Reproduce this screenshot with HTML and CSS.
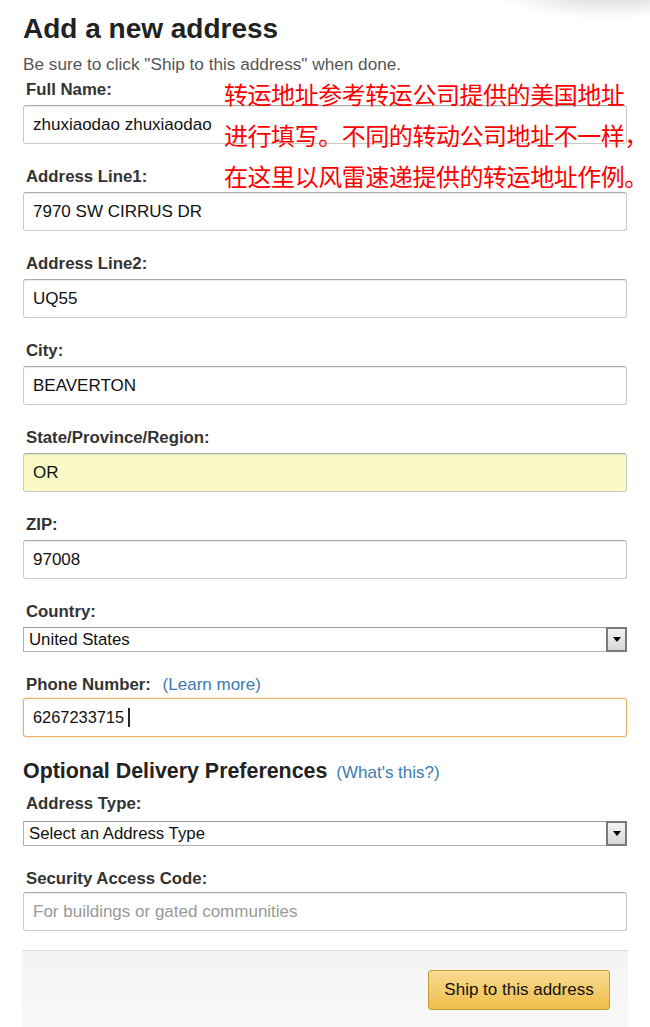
FILE: index.html
```html
<!DOCTYPE html>
<html lang="en">
<head>
<meta charset="utf-8">
<title>Add a new address</title>
<link rel="stylesheet" href="styles.css">
</head>
<body>
<div class="page">
  <div class="corner-shadow"></div>
  <h1 class="title">Add a new address</h1>
  <p class="subtitle">Be sure to click "Ship to this address" when done.</p>

  <div class="field">
    <div class="label">Full Name:</div>
    <div class="input">zhuxiaodao zhuxiaodao</div>
  </div>
  <div class="field">
    <div class="label">Address Line1:</div>
    <div class="input">7970 SW CIRRUS DR</div>
  </div>
  <div class="field">
    <div class="label">Address Line2:</div>
    <div class="input">UQ55</div>
  </div>
  <div class="field">
    <div class="label">City:</div>
    <div class="input">BEAVERTON</div>
  </div>
  <div class="field">
    <div class="label">State/Province/Region:</div>
    <div class="input input-autofill">OR</div>
  </div>
  <div class="field">
    <div class="label">ZIP:</div>
    <div class="input">97008</div>
  </div>
  <div class="field field-select">
    <div class="label">Country:</div>
    <div class="select">
      <span class="select-text">United States</span>
      <span class="select-btn"><span class="arrow"></span></span>
    </div>
  </div>
  <div class="field field-tight">
    <div class="label">Phone Number: <span class="link">(Learn more)</span></div>
    <div class="input input-focus"><span class="phone">6267233715</span><span class="caret"></span></div>
  </div>

  <h2 class="section">Optional Delivery Preferences <span class="link">(What's this?)</span></h2>
  <div class="field field-select field-after-section">
    <div class="label">Address Type:</div>
    <div class="select">
      <span class="select-text">Select an Address Type</span>
      <span class="select-btn"><span class="arrow"></span></span>
    </div>
  </div>
  <div class="field field-tight field-last">
    <div class="label">Security Access Code:</div>
    <div class="input placeholder">For buildings or gated communities</div>
  </div>

  <div class="footer">
    <button class="ship-btn" type="button">Ship to this address</button>
  </div>

  <div class="note">转运地址参考转运公司提供的美国地址<br>进行填写。不同的转动公司地址不一样，<br>在这里以风雷速递提供的转运地址作例。</div>
</div>
</body>
</html>
```

FILE: styles.css
```css
html, body {
  margin: 0;
  padding: 0;
  background: #fff;
  overflow: hidden;
}

body {
  font-family: "Liberation Sans", Arial, sans-serif;
  color: #111;
}

.page {
  position: relative;
  width: 650px;
  height: 1027px;
  overflow: hidden;
  padding: 13px 0 0 23px;
  box-sizing: border-box;
}

.corner-shadow {
  position: absolute;
  top: -30px;
  right: -40px;
  width: 200px;
  height: 50px;
  border-radius: 50%;
  background: radial-gradient(ellipse at 60% 40%, rgba(0,0,0,0.18) 0%, rgba(0,0,0,0.06) 45%, rgba(0,0,0,0) 70%);
}

.title {
  margin: 0;
  font-size: 28px;
  line-height: 32px;
  font-weight: bold;
  color: #222;
}

.subtitle {
  margin: 9px 0 3px;
  font-size: 17.2px;
  line-height: 20px;
  color: #555;
}

.field {
  width: 604px;
  margin-bottom: 20px;
}

.label {
  margin: 0 0 5px 3px;
  padding-top: 3px;
  font-size: 16.8px;
  line-height: 20px;
  font-weight: bold;
  color: #333;
}

.field-tight .label {
  padding-top: 2px;
  margin-bottom: 3px;
}

.field-after-section .label {
  padding-top: 1px;
  margin-bottom: 7px;
}

.field-select {
  margin-bottom: 21px;
}

.field-last {
  margin-bottom: 19px;
}

.link {
  font-weight: normal;
  color: #3a7bb0;
  font-size: 17px;
  margin-left: 7px;
}

.input {
  height: 39px;
  box-sizing: border-box;
  border: 1px solid #c9c9c9;
  border-top-color: #aaa;
  border-radius: 3px;
  box-shadow: inset 0 1px 1px rgba(0,0,0,0.08);
  padding: 0 9px;
  display: flex;
  align-items: center;
  font-size: 17px;
  color: #111;
  background: #fff;
}

.input-autofill {
  background: #fafac6;
}

.input-focus {
  border-color: #e8ad5f;
  box-shadow: 0 0 2px rgba(228,160,70,0.5);
}

.phone {
  font-size: 16.4px;
}

.caret {
  display: inline-block;
  width: 2px;
  height: 19px;
  margin-left: 4px;
  background: #222;
}

.placeholder {
  color: #999;
}

.select {
  height: 25px;
  box-sizing: border-box;
  border: 1px solid #b2b2b2;
  border-top-color: #999;
  display: flex;
  align-items: stretch;
  background: #fff;
}

.select-text {
  flex: 1;
  display: flex;
  align-items: center;
  padding-left: 5px;
  font-size: 16.8px;
  color: #111;
}

.select-btn {
  width: 21px;
  box-sizing: border-box;
  border: 2px solid #7a7a7a;
  margin: -1px -1px -1px 0;
  background: linear-gradient(#f3f3f3, #d8d8d8);
  display: flex;
  align-items: center;
  justify-content: center;
}

.arrow {
  width: 0;
  height: 0;
  border-left: 4px solid transparent;
  border-right: 4px solid transparent;
  border-top: 5px solid #000;
}

.section {
  margin: 22px 0 8px;
  font-size: 21.4px;
  line-height: 24px;
  font-weight: bold;
  color: #222;
}

.section .link {
  font-size: 17px;
  margin-left: 3px;
}

.footer {
  width: 606px;
  margin-left: -1px;
  box-sizing: border-box;
  border-top: 1px solid #e0e0e0;
  background: linear-gradient(#f4f4f4, #f9f9f9);
  padding: 19px 18px 30px;
  display: flex;
  justify-content: flex-end;
}

.ship-btn {
  width: 182px;
  height: 40px;
  border: 1px solid #c49a36;
  border-radius: 3px;
  background: linear-gradient(#f9dc90, #efbd4a);
  font-family: "Liberation Sans", Arial, sans-serif;
  font-size: 17px;
  color: #111;
  padding: 0;
}

.note {
  position: absolute;
  left: 224px;
  top: 73px;
  font-family: "Noto Sans CJK SC", "Liberation Sans", sans-serif;
  font-size: 24px;
  letter-spacing: -0.45px;
  line-height: 41px;
  color: #ff0000;
  white-space: nowrap;
}
```
